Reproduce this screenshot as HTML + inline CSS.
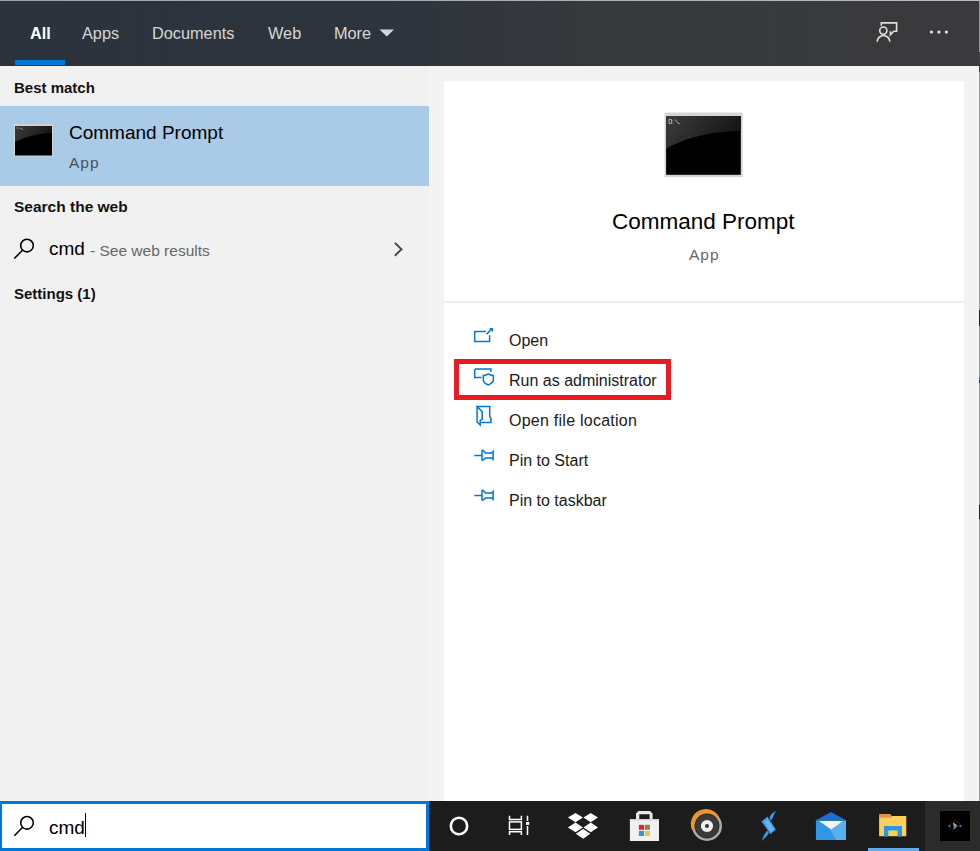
<!DOCTYPE html>
<html><head><meta charset="utf-8">
<style>
html,body{margin:0;padding:0;}
body{width:980px;height:851px;position:relative;overflow:hidden;background:#f2f2f2;font-family:"Liberation Sans",sans-serif;}
.a{position:absolute;}
.t{position:absolute;white-space:nowrap;line-height:1;}
#hdr{left:0;top:0;width:979px;height:66px;background:linear-gradient(90deg,#2d333c 0%,#2e343d 40%,#37393b 62%,#3a3a3c 100%);}
#hdrline{left:0;top:0;width:979px;height:1px;background:linear-gradient(90deg,#a0a2ae,#b8bcbe);}
.tab{color:#d6d6d6;font-size:16.3px;top:25px;}
#left{left:0;top:66px;width:429px;height:735px;background:#f1f1f1;}
#gap{left:429px;top:66px;width:550px;height:735px;background:#f3f3f3;}
#white{left:444px;top:81px;width:520px;height:720px;background:#fff;}
#sep{left:444px;top:301px;width:520px;height:2px;background:#ededed;}
#edge{left:979px;top:0;width:1px;height:851px;background:#9a9a9a;}
#hl{left:0;top:106px;width:429px;height:80px;background:#aacbe8;}
.bold{font-weight:bold;}
.act{font-size:16px;color:#1a1a1a;left:509px;}
#tb{left:0;top:801px;width:980px;height:50px;background:#1c1c1c;}
#tbr{left:925px;top:801px;width:55px;height:50px;background:#2b2b2b;}
#sbox{left:0;top:801px;width:424px;height:44px;border:3px solid #0078d7;border-left-width:2px;background:#fff;}
#red{left:454px;top:359px;width:207px;height:31px;border:5px solid #e81b23;}
</style></head><body>
<div class="a" id="hdr"></div>
<div class="a" id="hdrline"></div>
<div class="t tab bold" style="left:30px;color:#fff;">All</div>
<div class="t tab" style="left:82px;">Apps</div>
<div class="t tab" style="left:152px;">Documents</div>
<div class="t tab" style="left:268px;">Web</div>
<div class="t tab" style="left:334px;">More</div>
<div class="a" style="left:15px;top:60px;width:50px;height:5px;background:#0078d7"></div>

<div class="a" id="left"></div>
<div class="a" id="gap"></div>
<div class="a" id="white"></div>
<div class="a" id="sep"></div>
<div class="a" id="edge"></div>
<div class="a" style="left:979px;top:310px;width:1px;height:16px;background:#202020"></div>
<div class="a" style="left:979px;top:377px;width:1px;height:3px;background:#2a8ae0"></div>
<div class="a" style="left:979px;top:380px;width:1px;height:3px;background:#202020"></div>
<div class="a" style="left:979px;top:505px;width:1px;height:14px;background:#202020"></div>
<div class="a" style="left:979px;top:52px;width:1px;height:20px;background:#404040"></div>

<div class="t bold" style="left:14px;top:80px;font-size:15px;color:#111">Best match</div>
<div class="a" id="hl"></div>
<div class="t" style="left:69px;top:123px;font-size:19px;color:#000">Command Prompt</div>
<div class="t" style="left:69px;top:155px;font-size:15.5px;letter-spacing:1px;color:#46505a">App</div>

<div class="t bold" style="left:14px;top:199px;font-size:15.5px;color:#111">Search the web</div>
<div class="t" style="left:49px;top:239px;font-size:19px;color:#000">cmd</div>
<div class="t" style="left:90px;top:243px;font-size:15.5px;color:#666">- See web results</div>
<div class="t bold" style="left:14px;top:286px;font-size:15px;color:#111">Settings (1)</div>

<div class="t" style="left:612px;top:211px;font-size:22.5px;color:#000">Command Prompt</div>
<div class="t" style="left:689px;top:247px;font-size:15.5px;letter-spacing:1px;color:#666">App</div>

<div class="t act" style="top:333px">Open</div>
<div class="t act" style="top:373px">Run as administrator</div>
<div class="t act" style="top:413px;letter-spacing:0.25px">Open file location</div>
<div class="t act" style="top:453px">Pin to Start</div>
<div class="t act" style="top:493px">Pin to taskbar</div>
<div class="a" id="red"></div>

<div class="a" id="tb"></div>
<div class="a" id="tbr"></div>
<div class="a" id="sbox"></div>
<div class="t" style="left:49px;top:818px;font-size:19px;color:#000">cmd</div>
<div class="a" style="left:85px;top:813px;width:1px;height:24px;background:#000"></div>

<svg class="a" style="left:0;top:0" width="980" height="851" viewBox="0 0 980 851">
<defs>
<linearGradient id="gl" x1="0" y1="0" x2="1" y2="0.3">
<stop offset="0" stop-color="#3c3c3c"/><stop offset="1" stop-color="#161616"/>
</linearGradient>
</defs>
<!-- More triangle -->
<path d="M379.5 29.5 L394 29.5 L386.75 36.5Z" fill="#d6d6d6"/>
<!-- feedback icon -->
<g fill="none" stroke="#e0e0e0" stroke-width="1.6">
<path d="M881.3 25.8 V22.9 H896.6 V31.3 H893.8 L890.4 34.8 V31.3"/>
<circle cx="883.3" cy="30.6" r="3.6"/>
<path d="M877.2 41.8 A6.3 6.3 0 0 1 889.8 41.8"/>
</g>
<circle cx="931.4" cy="32" r="1.6" fill="#e8e8e8"/>
<circle cx="938.9" cy="32" r="1.6" fill="#e8e8e8"/>
<circle cx="946.4" cy="32" r="1.6" fill="#e8e8e8"/>

<!-- small cmd icon -->
<g>
<rect x="14" y="124" width="39" height="32.5" fill="#d2d2d2"/>
<rect x="15" y="126" width="37" height="29.5" fill="#000"/>
<path d="M15 126 H52 V133 C40 133 24 137 15 142Z" fill="url(#gl)"/>
<path d="M16.5 128 h2 M19.5 128.5 h1 M21 128 l2 2" stroke="#aaa" stroke-width="0.7"/>
</g>
<!-- big cmd icon -->
<g>
<rect x="664.5" y="112.5" width="78.2" height="64.7" fill="#d6d6d6"/>
<rect x="666.1" y="116.1" width="74.7" height="58.7" fill="#000"/>
<path d="M666.1 116.1 H740.8 V131 C715 131 685 137 666.1 149Z" fill="url(#gl)"/>
<path d="M669 119.5 h2.5 v4 h-2.5z M673 120.5 v0.8 M673 122.8 v0.8 M675 119.5 l3.5 4 h1.5" stroke="#b0b0b0" stroke-width="0.9" fill="none"/>
</g>

<!-- left search icon -->
<g fill="none" stroke="#000" stroke-width="1.6">
<circle cx="27" cy="245.6" r="6.3"/>
<path d="M14.3 258.5 L22.5 250.3"/>
</g>
<!-- chevron -->
<path d="M394.9 242.9 L401.5 249.3 L394.9 255.7" fill="none" stroke="#444" stroke-width="1.9"/>

<!-- action icons -->
<g fill="none" stroke="#0078d7" stroke-width="1.5">
<path d="M486 331.6 H474.7 V341.4 H489.6 V335.3"/>
<path d="M486.6 334.1 L491 329.7"/>
<path d="M475 369 H490.9 V372 M481.6 377.6 H474.7 V369"/>
<path d="M488.3 373.9 C486.8 375 485 375.5 483.3 375.4 V379.8 C483.3 382 486 384 488.3 385 C490.6 384 493.4 382 493.4 379.8 V375.4 C491.6 375.5 489.8 375 488.3 373.9Z"/>
<path d="M477.1 406.6 H489.7 V416.5 L491 418.4 V422.4 H481.2"/>
<path d="M477.1 406.6 V422 L480.2 425 V420.4 L482.2 419.1 V411.5 Z"/>
<path d="M474.3 455.4 H482 M482 449.8 V460.4 M482 449.9 C484 450.2 485 452.9 485.4 452.9 H491.7 L493.1 451.4 V459.4 L491.7 458 H485.4 C485 458 484 460.2 482 460.4"/>
<path d="M474.3 495.4 H482 M482 489.8 V500.4 M482 489.9 C484 490.2 485 492.9 485.4 492.9 H491.7 L493.1 491.4 V499.4 L491.7 498 H485.4 C485 498 484 500.2 482 500.4"/>
</g>
<path d="M489.1 328 H493 V332.2Z" fill="#0078d7"/>

<!-- taskbar search icon -->
<g fill="none" stroke="#000" stroke-width="1.6">
<circle cx="27" cy="822.8" r="6.3"/>
<path d="M14.3 835.7 L22.5 827.5"/>
</g>
<!-- cortana -->
<circle cx="459" cy="826" r="8.2" fill="none" stroke="#fff" stroke-width="2.6"/>
<!-- task view -->
<g fill="none" stroke="#fff" stroke-width="1.5">
<path d="M509.5 815.8 V819.4 H521.4 V815.8"/>
<rect x="509.5" y="821.9" width="11.9" height="7.5"/>
<path d="M509.5 835 V831.8 H521.4 V835"/>
<path d="M527.5 815.8 V821 M527.5 826 V835"/>
</g>
<rect x="526" y="822" width="3.2" height="2.9" fill="#fff"/>
<!-- dropbox -->
<g fill="#fff">
<path d="M567.9 817.5 L575.5 812.9 L582.9 817.5 L575.5 822.2Z"/>
<path d="M583.5 817.5 L590.7 812.9 L598 817.5 L590.7 822.2Z"/>
<path d="M567.9 827.4 L575.5 822.6 L582.9 827.4 L575.5 832.2Z"/>
<path d="M583.5 827.4 L590.7 822.6 L598 827.4 L590.7 832.2Z"/>
<path d="M575.8 833.8 L583.2 829 L590.3 833.8 L583.2 838.7Z"/>
</g>
<!-- store -->
<g>
<path d="M636 819.5 V813.5 L638.5 810.9 H650 L652.6 813.5 V819.5 H649.6 V814.2 H639.3 V819.5Z" fill="#e8e8e8"/>
<rect x="629.9" y="819.1" width="29.1" height="21.9" fill="#f0f0f0"/>
<rect x="629.9" y="819.1" width="29.1" height="1.2" fill="#cfcfcf"/>
<rect x="638.9" y="824.8" width="5.1" height="5" fill="#e8282a"/>
<rect x="644.9" y="824.8" width="5.1" height="5" fill="#a47a3e"/>
<rect x="638.9" y="831" width="5.1" height="5" fill="#2a96e2"/>
<rect x="644.9" y="831" width="5.1" height="5" fill="#eec04a"/>
</g>
<!-- disc -->
<g>
<circle cx="707" cy="826" r="15" fill="#a9a9b0"/>
<path d="M707 826 L692 830 A15 15 0 0 1 719 817 Z" fill="#e8962e"/>
<circle cx="707" cy="826" r="12.4" fill="#262626"/><circle cx="707" cy="826" r="11.6" fill="#3a3a3a"/>
<circle cx="707" cy="826" r="6.1" fill="#f0f0f0"/>
<circle cx="707" cy="826" r="2" fill="#333"/>
</g>
<!-- lightning -->
<g>
<path d="M775.8 810.8 L773.2 816.8 L771 821 L769.3 818.4 L771.2 814.3Z" fill="#3a9ae8"/>
<path d="M761 821.4 L767.6 816.2 L776.3 829.4 L770.4 834.7Z" fill="#3f9fec" stroke="#1c1c1c" stroke-width="0.9"/>
<path d="M764.5 822 L767.6 819 L774 829.2 L770.6 832.2Z" fill="#6ab6f2"/>
<path d="M761.8 841 L764 835 L767.3 830.6 L769 833 L766.4 836.6Z" fill="#3a9ae8"/>
</g>
<!-- mail -->
<g>
<path d="M815.9 820.3 L831 811.9 L846 820.3Z" fill="#1a6fd0"/>
<rect x="815.9" y="820.3" width="30.1" height="19.7" fill="#2e98e4"/>
<path d="M830 829.5 L846 820.3 V840 H836Z" fill="#5ab0ee"/>
<path d="M819 821 H843.4 L831 829.5Z" fill="#f4f4f4"/>
</g>
<!-- explorer -->
<g>
<path d="M879.1 816 H906.3 V836.2 H879.1Z" fill="#fbcf5a"/>
<path d="M879.1 813.9 H890 L891.8 815.8 V817.8 H879.1Z" fill="#e0964a"/>
<path d="M884 826 H902 V836.6 H897.5 V830.4 H888.3 V836.6 H884Z" fill="#2c96e2"/>
</g>
<rect x="868" y="848" width="51" height="3" fill="#62aaea"/>
<!-- right-end app -->
<rect x="940" y="811" width="30" height="30" fill="#000"/>
<circle cx="955" cy="826" r="5.2" fill="none" stroke="#3a3a3a" stroke-width="0.8" stroke-dasharray="2 1.2"/>
<path d="M952.8 822.3 L957.2 825.3 L953.8 826.8Z" fill="#f0a038"/>
<path d="M953.8 826.8 L958.8 825.2 L953.2 830Z" fill="#4aa6ee"/>
<rect x="948.6" y="825" width="1.6" height="2" fill="#2a8ae0"/>
<rect x="959.6" y="825" width="1.6" height="2" fill="#2a8ae0"/>
</svg>
</body></html>
